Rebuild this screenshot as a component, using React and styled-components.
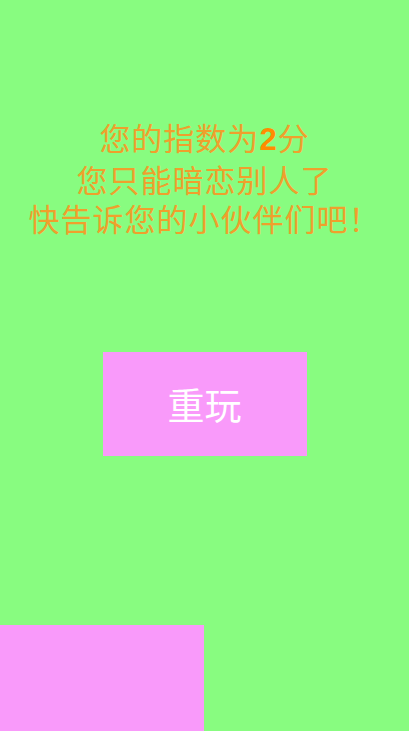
import styled, { createGlobalStyle } from "styled-components";

const GlobalStyle = createGlobalStyle`
  html, body {
    margin: 0;
    padding: 0;
    background: #88fc80;
  }
  body {
    font-family: "Noto Sans CJK SC", "Noto Sans", sans-serif;
  }
`;

const Page = styled.div`
  width: 409px;
  height: 731px;
  overflow: hidden;
  background: #88fc80;
  display: flex;
  flex-direction: column;
  align-items: center;
`;

const Result = styled.div`
  margin-top: 117px;
  text-align: center;
  color: #efa02c;
  font-size: 31px;
  font-weight: 400;
  line-height: 39px;
  letter-spacing: 1px;
  white-space: nowrap;
  flex-shrink: 0;
`;

const Score = styled.b`
  color: #ff8c00;
  font-family: "Liberation Sans", sans-serif;
  font-weight: 700;
`;

const Replay = styled.button`
  all: unset;
  box-sizing: border-box;
  margin-top: 115px;
  width: 204px;
  height: 104px;
  flex-shrink: 0;
  background: #f99afa;
  color: #fff;
  font-size: 37px;
  display: flex;
  align-items: center;
  justify-content: center;
  cursor: pointer;
`;

const Share = styled.div`
  align-self: flex-start;
  margin-top: 169px;
  width: 204px;
  height: 110px;
  flex-shrink: 0;
  background: #f99afa;
`;

export default function App() {
  return (
    <>
      <GlobalStyle />
      <Page>
        <Result>
          <div>
            您的指数为<Score>2</Score>分
          </div>
          <div>您只能暗恋别人了</div>
          <div>快告诉您的小伙伴们吧！</div>
        </Result>
        <Replay>重玩</Replay>
        <Share />
      </Page>
    </>
  );
}
